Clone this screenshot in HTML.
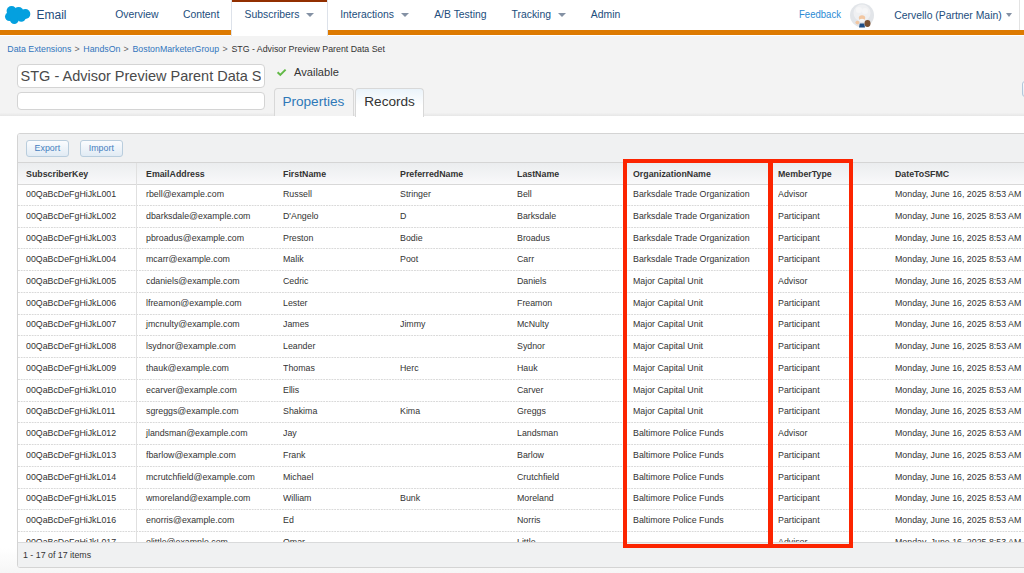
<!DOCTYPE html>
<html><head><meta charset="utf-8">
<style>
*{box-sizing:border-box;margin:0;padding:0}
html,body{width:1024px;height:573px;overflow:hidden;background:#fff;font-family:"Liberation Sans",sans-serif;color:#333}
.abs{position:absolute;white-space:nowrap}
#hdr{position:absolute;left:0;top:0;width:1024px;height:31px;background:#fff}
#orange{position:absolute;left:0;top:30.2px;width:1024px;height:4.6px;background:#dd7a01}
#gray{position:absolute;left:0;top:35.7px;width:1024px;height:80.8px;background:linear-gradient(#f3f3f3 0,#f3f3f3 76.5px,#e4e4e4 80.8px)}
.nav{position:absolute;top:-0.8px;height:31px;line-height:31px;font-size:10.4px;color:#224d7c}
.caret{position:absolute;width:0;height:0;border-left:4px solid transparent;border-right:4px solid transparent;border-top:4.8px solid #8491a4}
#subtab{position:absolute;left:230.6px;top:0;width:97.1px;height:35.7px;background:#fff;border-left:1px solid #dde2ea;border-right:1px solid #dde2ea}
#subtab:before{content:"";position:absolute;left:0;right:0;top:0;height:1.8px;background:#922f00}
.crumb{position:absolute;top:43.9px;font-size:8.8px;line-height:11px;color:#3275bd}
.crumbd{position:absolute;top:43.9px;font-size:8.8px;line-height:11px;color:#333}
.gt{position:absolute;top:43.9px;font-size:8.8px;line-height:11px;color:#666}
.inp{position:absolute;left:16.8px;width:248px;background:#fff;border:1px solid #d4d4d4;border-radius:4px}
.tab{position:absolute;top:88px;height:28px;border:1px solid #d8d8d8;border-bottom:none;border-radius:4px 4px 0 0;font-size:13.6px;line-height:26px}
#grid{position:absolute;left:17px;top:133px;width:1020px;height:435px;border:1px solid #d4d4d4;border-radius:3px;background:#fff;overflow:hidden}
#tb{position:absolute;left:0;top:0;width:100%;height:29px;background:#f0f1f2;border-bottom:1px solid #d5d5d5}
.btn{position:absolute;top:5.6px;height:17.3px;border:1px solid #b9cddd;border-radius:3px;background:linear-gradient(#fbfcfe,#e1ebf4);font-size:8.85px;line-height:15.3px;color:#4580bf;text-align:center}
#th{position:absolute;left:0;top:29px;width:100%;height:21.5px;background:linear-gradient(#ebedef,#f9f9fa);border-bottom:1px solid #d8d8d8}
.hc{position:absolute;top:0.3px;line-height:21px;font-size:9.4px;font-weight:bold;color:#333;transform:scaleX(0.94);transform-origin:0 0;white-space:nowrap}
.row{position:absolute;left:0;width:100%;height:21.73px;background:linear-gradient(90deg,#d9d9d9 60%,transparent 60%) 0 100%/2.75px 1px repeat-x}
.c{position:absolute;top:-1.2px;line-height:21px;font-size:9.4px;color:#333;white-space:nowrap;transform:scaleX(0.94);transform-origin:0 0}
#vdiv{position:absolute;left:118px;top:29px;width:1px;height:379px;background:#e0e0e0}
#pager{position:absolute;left:0;top:408px;width:100%;height:27px;background:#f0f1f2;border-top:1px solid #d9dadb;font-size:9.4px;line-height:23.5px;color:#333;padding-left:5.2px}
#pager span{display:inline-block;transform:scaleX(0.94);transform-origin:0 0}
.red{position:absolute;border:4px solid #fc2400}
</style></head><body>
<div id="hdr"></div>
<div id="orange"></div>
<div id="gray"></div>
<div id="subtab"></div>
<!-- logo -->
<svg class="abs" style="left:0;top:0" width="40" height="30" viewBox="0 0 40 30">
<g fill="#04a0df">
<circle cx="11.6" cy="11.1" r="5"/><circle cx="18.6" cy="12" r="5"/><circle cx="25.4" cy="14" r="4.9"/><circle cx="9.4" cy="16.6" r="4.4"/><circle cx="14.3" cy="19.8" r="4.3"/><circle cx="21.3" cy="17.4" r="4.4"/><rect x="10" y="12" width="14" height="6"/>
</g></svg>
<div class="nav" style="left:36.5px;top:-0.3px;font-size:12px;color:#224d7c">Email</div>
<div class="nav" style="left:115.2px">Overview</div>
<div class="nav" style="left:182.9px">Content</div>
<div class="nav" style="left:244.6px">Subscribers</div>
<div class="caret" style="left:306.3px;top:12.7px"></div>
<div class="nav" style="left:340.2px">Interactions</div>
<div class="caret" style="left:401px;top:12.5px"></div>
<div class="nav" style="left:434.2px">A/B Testing</div>
<div class="nav" style="left:511.5px">Tracking</div>
<div class="caret" style="left:558px;top:12.5px"></div>
<div class="nav" style="left:590.8px">Admin</div>
<div class="nav" style="left:798.6px;top:-1.5px;font-size:10.4px;color:#2a8ad4;transform:scaleX(0.92);transform-origin:0 0">Feedback</div>
<svg class="abs" style="left:850px;top:3px" width="24" height="25" viewBox="0 0 24 25">
<circle cx="12" cy="12.2" r="12" fill="#e2e5e9"/>
<circle cx="12" cy="10" r="8.5" fill="#eff0f2"/>
<circle cx="9" cy="7" r="3" fill="#f6f6f7"/><circle cx="15" cy="8" r="3" fill="#f6f6f7"/>
<ellipse cx="12" cy="14.8" rx="3.2" ry="2.6" fill="#f2c7a2"/>
<ellipse cx="12" cy="17.4" rx="2.6" ry="1.6" fill="#f7f7f7"/>
<ellipse cx="7.4" cy="19.6" rx="2" ry="1.8" fill="#f2c7a2"/>
<path d="M9 24.5 L9.8 20.5 L14.2 20.5 L15 24.5Z" fill="#1d4d86"/>
<ellipse cx="17.5" cy="20.5" rx="3" ry="3.4" fill="#7a5132"/>
</svg>
<div class="nav" style="left:894.3px;top:-0.2px">Cervello (Partner Main)</div>
<div class="caret" style="left:1006.3px;top:12.5px;border-left-width:3.7px;border-right-width:3.7px;border-top-width:4.2px"></div>
<div class="abs" style="left:1019px;top:0;width:1px;height:30px;background:#e3e3e3"></div>

<!-- breadcrumb -->
<div class="crumb" style="left:7.3px">Data Extensions</div>
<div class="gt" style="left:74.4px">&gt;</div>
<div class="crumb" style="left:83.3px">HandsOn</div>
<div class="gt" style="left:123.6px">&gt;</div>
<div class="crumb" style="left:132.5px">BostonMarketerGroup</div>
<div class="gt" style="left:222.6px">&gt;</div>
<div class="crumbd" style="left:231.4px">STG - Advisor Preview Parent Data Set</div>

<div class="inp" style="top:64px;height:23.5px;overflow:hidden"><div class="abs" style="left:0;top:0;width:243.4px;height:21.5px;overflow:hidden"><div class="abs" style="left:2.8px;top:0.6px;line-height:21.5px;font-size:14.5px;color:#4a4a4a">STG - Advisor Preview Parent Data Set</div></div></div>
<div class="inp" style="top:91.5px;height:18px"></div>
<svg class="abs" style="left:276px;top:68px" width="11" height="9" viewBox="0 0 11 9"><path d="M1.6 4.3 L4.3 6.9 L9.6 1.6" fill="none" stroke="#62b947" stroke-width="2"/></svg>
<div class="abs" style="left:294px;top:65px;font-size:11.1px;line-height:14px;color:#333">Available</div>
<div class="tab" style="left:273.8px;width:79.8px;background:#f3f3f3;color:#2e78b8;padding-left:7.6px">Properties</div>
<div class="tab" style="left:355.3px;width:68.5px;background:linear-gradient(#eaf3fa,#fff 60%);color:#333;padding-left:8px;height:29px">Records</div>
<div class="abs" style="left:1022px;top:81px;width:10px;height:15.8px;border:1px solid #b3c7da;border-radius:3px;background:linear-gradient(#fbfcfe,#e3ecf4)"></div>

<div class="abs" style="left:0;top:548px;width:1024px;height:25px;background:linear-gradient(#fff,#f6f6f6)"></div>
<div id="grid">
 <div id="tb">
  <div class="btn" style="left:8px;width:42.7px">Export</div>
  <div class="btn" style="left:62px;width:42.7px">Import</div>
 </div>
 <div id="th">
  <div class="hc" style="left:7.8px">SubscriberKey</div>
  <div class="hc" style="left:127.6px">EmailAddress</div>
  <div class="hc" style="left:264.5px">FirstName</div>
  <div class="hc" style="left:381.5px">PreferredName</div>
  <div class="hc" style="left:498.5px">LastName</div>
  <div class="hc" style="left:614.8px">OrganizationName</div>
  <div class="hc" style="left:759.8px">MemberType</div>
  <div class="hc" style="left:876.8px">DateToSFMC</div>
 </div>
 <div id="rows"><!--ROWS-->
<div class="row" style="top:50.30px"><div class="c" style="left:7.8px">00QaBcDeFgHiJkL001</div><div class="c" style="left:127.6px">rbell@example.com</div><div class="c" style="left:264.5px">Russell</div><div class="c" style="left:381.5px">Stringer</div><div class="c" style="left:498.5px">Bell</div><div class="c" style="left:614.8px">Barksdale Trade Organization</div><div class="c" style="left:759.8px">Advisor</div><div class="c" style="left:876.8px">Monday, June 16, 2025 8:53 AM</div></div>
<div class="row" style="top:72.03px"><div class="c" style="left:7.8px">00QaBcDeFgHiJkL002</div><div class="c" style="left:127.6px">dbarksdale@example.com</div><div class="c" style="left:264.5px">D&#39;Angelo</div><div class="c" style="left:381.5px">D</div><div class="c" style="left:498.5px">Barksdale</div><div class="c" style="left:614.8px">Barksdale Trade Organization</div><div class="c" style="left:759.8px">Participant</div><div class="c" style="left:876.8px">Monday, June 16, 2025 8:53 AM</div></div>
<div class="row" style="top:93.76px"><div class="c" style="left:7.8px">00QaBcDeFgHiJkL003</div><div class="c" style="left:127.6px">pbroadus@example.com</div><div class="c" style="left:264.5px">Preston</div><div class="c" style="left:381.5px">Bodie</div><div class="c" style="left:498.5px">Broadus</div><div class="c" style="left:614.8px">Barksdale Trade Organization</div><div class="c" style="left:759.8px">Participant</div><div class="c" style="left:876.8px">Monday, June 16, 2025 8:53 AM</div></div>
<div class="row" style="top:115.49px"><div class="c" style="left:7.8px">00QaBcDeFgHiJkL004</div><div class="c" style="left:127.6px">mcarr@example.com</div><div class="c" style="left:264.5px">Malik</div><div class="c" style="left:381.5px">Poot</div><div class="c" style="left:498.5px">Carr</div><div class="c" style="left:614.8px">Barksdale Trade Organization</div><div class="c" style="left:759.8px">Participant</div><div class="c" style="left:876.8px">Monday, June 16, 2025 8:53 AM</div></div>
<div class="row" style="top:137.22px"><div class="c" style="left:7.8px">00QaBcDeFgHiJkL005</div><div class="c" style="left:127.6px">cdaniels@example.com</div><div class="c" style="left:264.5px">Cedric</div><div class="c" style="left:498.5px">Daniels</div><div class="c" style="left:614.8px">Major Capital Unit</div><div class="c" style="left:759.8px">Advisor</div><div class="c" style="left:876.8px">Monday, June 16, 2025 8:53 AM</div></div>
<div class="row" style="top:158.95px"><div class="c" style="left:7.8px">00QaBcDeFgHiJkL006</div><div class="c" style="left:127.6px">lfreamon@example.com</div><div class="c" style="left:264.5px">Lester</div><div class="c" style="left:498.5px">Freamon</div><div class="c" style="left:614.8px">Major Capital Unit</div><div class="c" style="left:759.8px">Participant</div><div class="c" style="left:876.8px">Monday, June 16, 2025 8:53 AM</div></div>
<div class="row" style="top:180.68px"><div class="c" style="left:7.8px">00QaBcDeFgHiJkL007</div><div class="c" style="left:127.6px">jmcnulty@example.com</div><div class="c" style="left:264.5px">James</div><div class="c" style="left:381.5px">Jimmy</div><div class="c" style="left:498.5px">McNulty</div><div class="c" style="left:614.8px">Major Capital Unit</div><div class="c" style="left:759.8px">Participant</div><div class="c" style="left:876.8px">Monday, June 16, 2025 8:53 AM</div></div>
<div class="row" style="top:202.41px"><div class="c" style="left:7.8px">00QaBcDeFgHiJkL008</div><div class="c" style="left:127.6px">lsydnor@example.com</div><div class="c" style="left:264.5px">Leander</div><div class="c" style="left:498.5px">Sydnor</div><div class="c" style="left:614.8px">Major Capital Unit</div><div class="c" style="left:759.8px">Participant</div><div class="c" style="left:876.8px">Monday, June 16, 2025 8:53 AM</div></div>
<div class="row" style="top:224.14px"><div class="c" style="left:7.8px">00QaBcDeFgHiJkL009</div><div class="c" style="left:127.6px">thauk@example.com</div><div class="c" style="left:264.5px">Thomas</div><div class="c" style="left:381.5px">Herc</div><div class="c" style="left:498.5px">Hauk</div><div class="c" style="left:614.8px">Major Capital Unit</div><div class="c" style="left:759.8px">Participant</div><div class="c" style="left:876.8px">Monday, June 16, 2025 8:53 AM</div></div>
<div class="row" style="top:245.87px"><div class="c" style="left:7.8px">00QaBcDeFgHiJkL010</div><div class="c" style="left:127.6px">ecarver@example.com</div><div class="c" style="left:264.5px">Ellis</div><div class="c" style="left:498.5px">Carver</div><div class="c" style="left:614.8px">Major Capital Unit</div><div class="c" style="left:759.8px">Participant</div><div class="c" style="left:876.8px">Monday, June 16, 2025 8:53 AM</div></div>
<div class="row" style="top:267.60px"><div class="c" style="left:7.8px">00QaBcDeFgHiJkL011</div><div class="c" style="left:127.6px">sgreggs@example.com</div><div class="c" style="left:264.5px">Shakima</div><div class="c" style="left:381.5px">Kima</div><div class="c" style="left:498.5px">Greggs</div><div class="c" style="left:614.8px">Major Capital Unit</div><div class="c" style="left:759.8px">Participant</div><div class="c" style="left:876.8px">Monday, June 16, 2025 8:53 AM</div></div>
<div class="row" style="top:289.33px"><div class="c" style="left:7.8px">00QaBcDeFgHiJkL012</div><div class="c" style="left:127.6px">jlandsman@example.com</div><div class="c" style="left:264.5px">Jay</div><div class="c" style="left:498.5px">Landsman</div><div class="c" style="left:614.8px">Baltimore Police Funds</div><div class="c" style="left:759.8px">Advisor</div><div class="c" style="left:876.8px">Monday, June 16, 2025 8:53 AM</div></div>
<div class="row" style="top:311.06px"><div class="c" style="left:7.8px">00QaBcDeFgHiJkL013</div><div class="c" style="left:127.6px">fbarlow@example.com</div><div class="c" style="left:264.5px">Frank</div><div class="c" style="left:498.5px">Barlow</div><div class="c" style="left:614.8px">Baltimore Police Funds</div><div class="c" style="left:759.8px">Participant</div><div class="c" style="left:876.8px">Monday, June 16, 2025 8:53 AM</div></div>
<div class="row" style="top:332.79px"><div class="c" style="left:7.8px">00QaBcDeFgHiJkL014</div><div class="c" style="left:127.6px">mcrutchfield@example.com</div><div class="c" style="left:264.5px">Michael</div><div class="c" style="left:498.5px">Crutchfield</div><div class="c" style="left:614.8px">Baltimore Police Funds</div><div class="c" style="left:759.8px">Participant</div><div class="c" style="left:876.8px">Monday, June 16, 2025 8:53 AM</div></div>
<div class="row" style="top:354.52px"><div class="c" style="left:7.8px">00QaBcDeFgHiJkL015</div><div class="c" style="left:127.6px">wmoreland@example.com</div><div class="c" style="left:264.5px">William</div><div class="c" style="left:381.5px">Bunk</div><div class="c" style="left:498.5px">Moreland</div><div class="c" style="left:614.8px">Baltimore Police Funds</div><div class="c" style="left:759.8px">Participant</div><div class="c" style="left:876.8px">Monday, June 16, 2025 8:53 AM</div></div>
<div class="row" style="top:376.25px"><div class="c" style="left:7.8px">00QaBcDeFgHiJkL016</div><div class="c" style="left:127.6px">enorris@example.com</div><div class="c" style="left:264.5px">Ed</div><div class="c" style="left:498.5px">Norris</div><div class="c" style="left:614.8px">Baltimore Police Funds</div><div class="c" style="left:759.8px">Participant</div><div class="c" style="left:876.8px">Monday, June 16, 2025 8:53 AM</div></div>
<div class="row" style="top:397.98px"><div class="c" style="left:7.8px">00QaBcDeFgHiJkL017</div><div class="c" style="left:127.6px">olittle@example.com</div><div class="c" style="left:264.5px">Omar</div><div class="c" style="left:498.5px">Little</div><div class="c" style="left:759.8px">Advisor</div><div class="c" style="left:876.8px">Monday, June 16, 2025 8:53 AM</div></div>
<!--/ROWS--></div>
 <div id="vdiv"></div>
 <div id="pager"><span>1 - 17 of 17 items</span></div>
</div>
<div class="red" style="left:623px;top:159px;width:150px;height:389.3px;border-bottom-width:4.6px"></div>
<div class="red" style="left:768.1px;top:159px;width:85.3px;height:388.5px"></div>
</body></html>
